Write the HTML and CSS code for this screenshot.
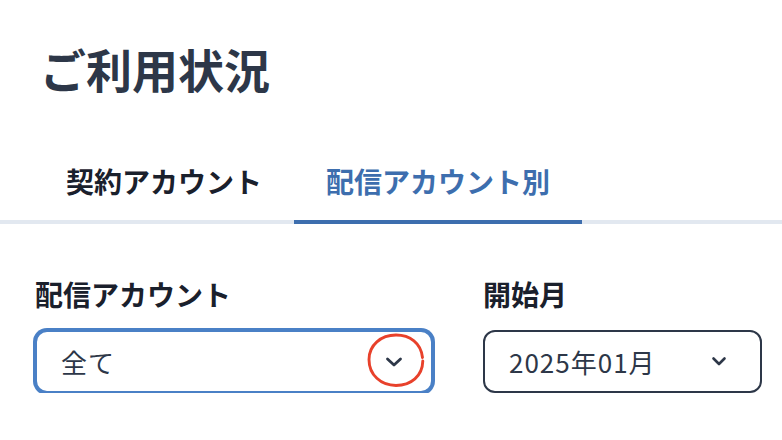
FILE: index.html
```html
<!DOCTYPE html>
<html lang="ja">
<head>
<meta charset="utf-8">
<title>ご利用状況</title>
<link rel="stylesheet" href="styles.css">
</head>
<body>
<main class="page">
  <h1 class="title">ご利用状況</h1>
  <nav class="tabs">
    <div class="tab">契約アカウント</div>
    <div class="tab tab--active">配信アカウント別</div>
  </nav>
  <section class="filters">
    <div class="field">
      <div class="field-label">配信アカウント</div>
      <div class="select select--focus">
        <span class="select-value">全て</span>
        <svg class="chevron chevron--lg" width="18" height="12" viewBox="0 0 18 12"><path d="M2.5 3 L9 9 L15.5 3" fill="none" stroke="#2d3748" stroke-width="2.8" stroke-linecap="round" stroke-linejoin="round"/></svg>
        <svg class="annotation" width="64" height="60" viewBox="0 0 64 60"><path d="M58.5 27.5 C57 13 46 5 32 5 C17 5 5 15 5 29.5 C5 45 17 55.5 32 55.5 C47 55.5 58.5 46 58.8 31" fill="none" stroke="#e8412b" stroke-width="2.9" stroke-linecap="round"/></svg>
      </div>
    </div>
    <div class="field">
      <div class="field-label">開始月</div>
      <div class="select select--plain">
        <span class="select-value">2025年01月</span>
        <svg class="chevron" width="16" height="11" viewBox="0 0 16 11"><path d="M2.5 2.5 L8 8 L13.5 2.5" fill="none" stroke="#2d3748" stroke-width="2.6" stroke-linecap="round" stroke-linejoin="round"/></svg>
      </div>
    </div>
  </section>
</main>
</body>
</html>
```

FILE: styles.css
```css
html, body {
  margin: 0;
  padding: 0;
  background: #ffffff;
}

body {
  font-family: "Noto Sans CJK JP", "Noto Sans", sans-serif;
  color: #1a202c;
}

.page {
  padding-top: 45px;
}

.title {
  margin: 0 0 0 40px;
  font-size: 46px;
  line-height: 46px;
  font-weight: 700;
  color: #2d3748;
}

.tabs {
  display: flex;
  margin-top: 60px;
  padding-left: 34px;
  border-bottom: 4px solid #e2e8f0;
}

.tab {
  padding: 16px 32px 25px;
  font-size: 28px;
  line-height: 28px;
  font-weight: 700;
  color: #1a202c;
  border-bottom: 4px solid transparent;
  margin-bottom: -4px;
}

.tab--active {
  color: #3d6eae;
  border-bottom-color: #3d6eae;
}

.filters {
  display: grid;
  grid-template-columns: 398px 279px;
  column-gap: 50px;
  padding-left: 35px;
  margin-top: 56px;
}

.field {
  display: flex;
  flex-direction: column;
  gap: 22px;
}

.field-label {
  font-size: 28px;
  line-height: 28px;
  font-weight: 700;
  color: #1a202c;
}

.select {
  position: relative;
  box-sizing: border-box;
  height: 63px;
  display: flex;
  align-items: center;
  justify-content: space-between;
  padding-left: 24px;
  border: 2.5px solid #2d3748;
  border-radius: 12px;
  background: #fff;
}

.select--focus {
  border-color: #4a80c6;
  box-shadow: 0 0 0 2px #4a80c6;
  padding-right: 28px;
}

.select--plain {
  padding-right: 33px;
}

.select-value {
  font-size: 26px;
  line-height: 26px;
  font-weight: 400;
  letter-spacing: 1px;
  color: #2d3748;
}

.chevron {
  display: block;
}

.annotation {
  position: absolute;
  left: 327px;
  top: -2px;
}
```
